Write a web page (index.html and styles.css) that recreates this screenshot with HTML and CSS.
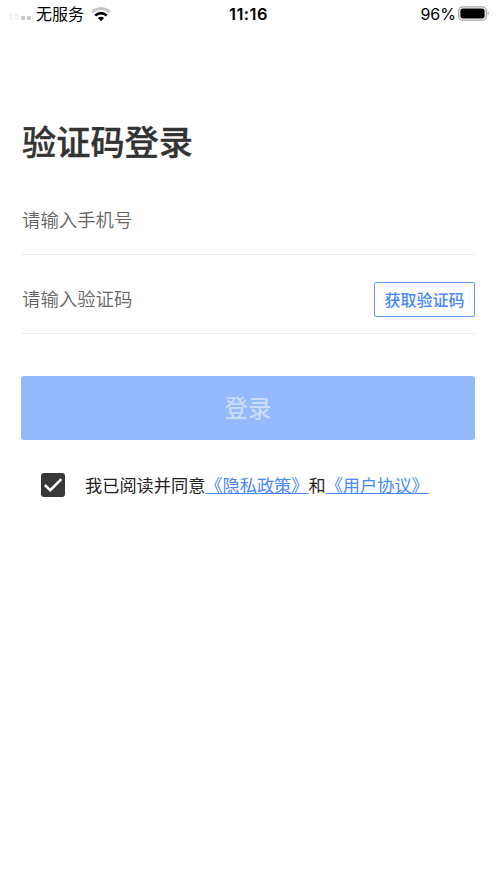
FILE: index.html
```html
<!DOCTYPE html>
<html lang="zh-CN">
<head>
<meta charset="utf-8">
<title>验证码登录</title>
<link rel="stylesheet" href="styles.css">
</head>
<body>
<header class="status">
  <div class="carrier">
    <svg class="signal" width="23" height="8" viewBox="0 0 23 8"><rect x="0" y="0" width="4" height="7" rx="1" fill="#f5f5f5"/><rect x="6" y="0" width="4" height="7" rx="1" fill="#f2f2f2"/><rect x="12" y="3" width="4" height="4" rx="1.2" fill="#c8c8c8"/><rect x="18" y="3" width="4" height="4" rx="1.2" fill="#c8c8c8"/></svg>
    <span class="service">无服务</span>
    <svg class="wifi" width="20" height="15" viewBox="0 0 20 15" fill="none" stroke-width="2.7"><path d="M1 5.2Q10-2.2 19 5.2" stroke="#c6c6c6"/><path d="M4.2 8.5Q10 3.8 15.8 8.5" stroke="#000"/><path d="M6.9 11Q10 8.6 13.1 11L10 14.3Z" fill="#000"/></svg>
  </div>
  <time class="time">11:16</time>
  <div class="power"><span>96%</span>
    <svg class="battery" width="32" height="15" viewBox="0 0 32 15"><rect x=".8" y=".8" width="27.4" height="13.4" rx="3.8" fill="none" stroke="#a6a6a6" stroke-width="1.3"/><rect x="2.4" y="2.4" width="24.2" height="10.2" rx="2.4"/><path d="M29.6 5Q32 7.5 29.6 10Z" fill="#a6a6a6"/></svg>
  </div>
</header>
<main class="login">
  <h1 class="title">验证码登录</h1>
  <div class="field">请输入手机号</div>
  <div class="field code"><span class="placeholder">请输入验证码</span><button class="get">获取验证码</button></div>
  <button class="submit">登录</button>
  <div class="agreement">
    <svg class="check" width="24" height="24" viewBox="0 0 24 24"><rect width="24" height="24" rx="3" fill="#38383a"/><path d="M3.8 12L9.3 17.2L20.3 6.2" fill="none" stroke="#fff" stroke-width="2.6"/></svg>
    <p class="terms">我已阅读并同意<a>《隐私政策》</a>和<a>《用户协议》</a></p>
  </div>
</main>
</body>
</html>
```
FILE: styles.css
```css
* { box-sizing: border-box; }
body { margin: 0; background: #fff; color: #333; font-family: "Liberation Sans", "Noto Sans CJK SC", sans-serif; }
.status { display: grid; grid-template-columns: 1fr auto 1fr; align-items: center; height: 28px; padding: 0 7px 0 9px; color: #000; font-size: 16px; font-family: Inter, "Noto Sans CJK SC", sans-serif; }
.carrier, .power { display: flex; align-items: center; }
.carrier { height: 28px; }
.signal { margin: 6px 4px 0 0; }
.service { line-height: 26px; }
.wifi { margin-left: 7px; }
.time { position: relative; left: -1px; font-size: 16.4px; font-weight: 600; letter-spacing: .5px; }
.power { justify-content: flex-end; gap: 3px; }
.battery { margin: -2px 0 0 -1px; }
.login { padding: 87px 22px 0; }
.title { margin: 0; height: 56px; line-height: 56px; font-size: 34.2px; font-weight: 500; -webkit-text-stroke: .35px #333; }
.field { display: flex; align-items: center; height: 69px; margin-top: 15px; padding-bottom: 2px; border-bottom: 1px solid #ebebeb; color: #666; font-size: 18.4px; font-weight: 350; }
.code { height: 79px; margin-top: 0; justify-content: space-between; padding: 12px 0 1px; }
.placeholder { margin-top: -3px; }
.get { width: 101px; height: 35px; margin-top: -1px; padding: 0 0 1px; border: 1.5px solid #5c98f8; border-radius: 2px; background: #fff; color: #4688fa; font: 500 16px "Noto Sans CJK SC", sans-serif; }
.submit { display: block; width: calc(100% + 1px); height: 64px; margin: 42px 0 0 -1px; padding: 0 0 2px; border: 0; border-radius: 3px; background: #95b9fa; color: #cbdcfb; font: 500 23.4px "Noto Sans CJK SC", sans-serif; }
.agreement { display: flex; align-items: center; margin: 32px 0 0 19px; height: 25px; }
.terms { margin: 0 0 1px 20px; font-size: 17.2px; color: #222; white-space: nowrap; }
.terms a { color: #4688fa; text-decoration: underline; }
```
